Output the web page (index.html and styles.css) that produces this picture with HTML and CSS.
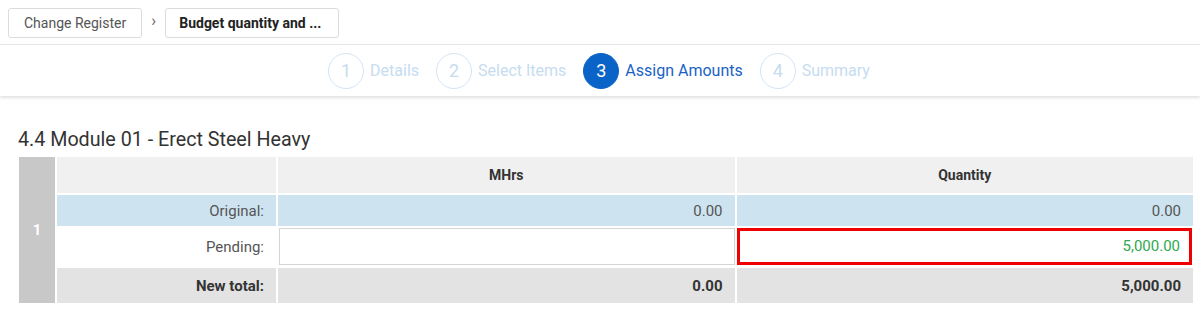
FILE: index.html
```html
<!DOCTYPE html>
<html>
<head>
<meta name="viewport" content="width=device-width, initial-scale=1">
<link rel="stylesheet" href="styles.css">
</head>
<body>

<div class="crumbs">
  <span class="crumb">Change Register</span>
  <span class="crumb-sep">&#8250;</span>
  <span class="crumb current">Budget quantity and ...</span>
</div>

<div class="steps">
  <div class="step"><span class="circle">1</span><span class="label">Details</span></div>
  <div class="step"><span class="circle">2</span><span class="label">Select Items</span></div>
  <div class="step active"><span class="circle">3</span><span class="label">Assign Amounts</span></div>
  <div class="step"><span class="circle">4</span><span class="label">Summary</span></div>
</div>

<h3 class="title">4.4 Module 01 - Erect Steel Heavy</h3>

<table class="amounts">
  <colgroup>
    <col class="c-idx">
    <col class="c-label">
    <col class="c-val">
    <col class="c-val">
  </colgroup>
  <tr class="head">
    <td class="idx" rowspan="4">1</td>
    <td></td>
    <td>MHrs</td>
    <td>Quantity</td>
  </tr>
  <tr class="original">
    <td class="lbl">Original:</td>
    <td class="num">0.00</td>
    <td class="num">0.00</td>
  </tr>
  <tr class="pending">
    <td class="lbl">Pending:</td>
    <td class="edit"><div class="box"></div></td>
    <td class="edit"><div class="box error">5,000.00</div></td>
  </tr>
  <tr class="total">
    <td class="lbl">New total:</td>
    <td class="num">0.00</td>
    <td class="num">5,000.00</td>
  </tr>
</table>

</body>
</html>
```

FILE: styles.css
```css
* {
  box-sizing: border-box;
}

body {
  margin: 0;
  font-family: Roboto, "Liberation Sans", sans-serif;
  color: #333;
  background: #fff;
}

.crumbs {
  display: flex;
  align-items: center;
  padding: 7px 8px 6px 8px;
  height: 44px;
}

.crumb {
  display: flex;
  align-items: center;
  height: 30px;
  padding: 0 15px;
  border: 1px solid #dcdcdc;
  border-radius: 3px;
  font-size: 14px;
  color: #555;
  white-space: nowrap;
}

.crumb.current {
  font-weight: bold;
  color: #222;
  width: 174px;
  padding: 0 13px;
}

.crumb-sep {
  width: 23px;
  text-align: center;
  font-size: 16px;
  color: #666;
  margin-top: -4px;
}

.steps {
  display: flex;
  justify-content: center;
  align-items: center;
  gap: 17px;
  height: 52px;
  border-top: 1px solid #e6e6e6;
  box-shadow: 0 2px 3px rgba(0, 0, 0, 0.12);
  padding-right: 2px;
}

.step {
  display: flex;
  align-items: center;
  gap: 6px;
  color: #c6dcf1;
  font-size: 16px;
}

.step .circle {
  width: 36px;
  height: 36px;
  border-radius: 50%;
  border: 1.5px solid #d3e4f4;
  display: flex;
  align-items: center;
  justify-content: center;
  font-size: 18px;
}

.step.active {
  color: #1a63c4;
}

.step.active .circle {
  background: #0a64c8;
  border-color: #0a64c8;
  color: #fff;
}

.title {
  margin: 32px 0 0 18px;
  font-size: 19.7px;
  font-weight: normal;
  color: #333;
  line-height: 24px;
}

.amounts {
  margin: 3px 0 0 17px;
  border-collapse: separate;
  border-spacing: 2px;
  width: 1178px;
  table-layout: fixed;
  font-size: 15px;
}

.c-idx { width: 36px; }
.c-label { width: 219px; }

.amounts td {
  padding: 0 12px;
}

.head td {
  background: #f0f0f0;
  height: 36px;
  text-align: center;
  font-weight: bold;
  font-size: 14px;
  color: #333;
}

.amounts td.idx {
  background: #c8c8c8;
  color: #fff;
  font-weight: bold;
  font-size: 15px;
  text-align: center;
  padding: 0;
}

.lbl {
  text-align: right;
  color: #555;
}

.num {
  text-align: right;
  color: #555;
}

.original td {
  background: #cde4f0;
  height: 31px;
}

.pending td {
  height: 38px;
}

.amounts td.edit {
  padding: 0;
  vertical-align: top;
}

.box {
  height: 37px;
  margin-left: 1px;
  border: 1px solid #d4d4d4;
  text-align: right;
  padding: 0 10px;
  line-height: 35px;
  color: #2fa84f;
}

.box.error {
  margin: 0 1px 0 0;
  border: 3px solid #f00000;
  line-height: 31px;
  padding-right: 9px;
}

.total td {
  background: #e3e3e3;
  height: 35px;
  font-weight: bold;
  color: #333;
}
```
